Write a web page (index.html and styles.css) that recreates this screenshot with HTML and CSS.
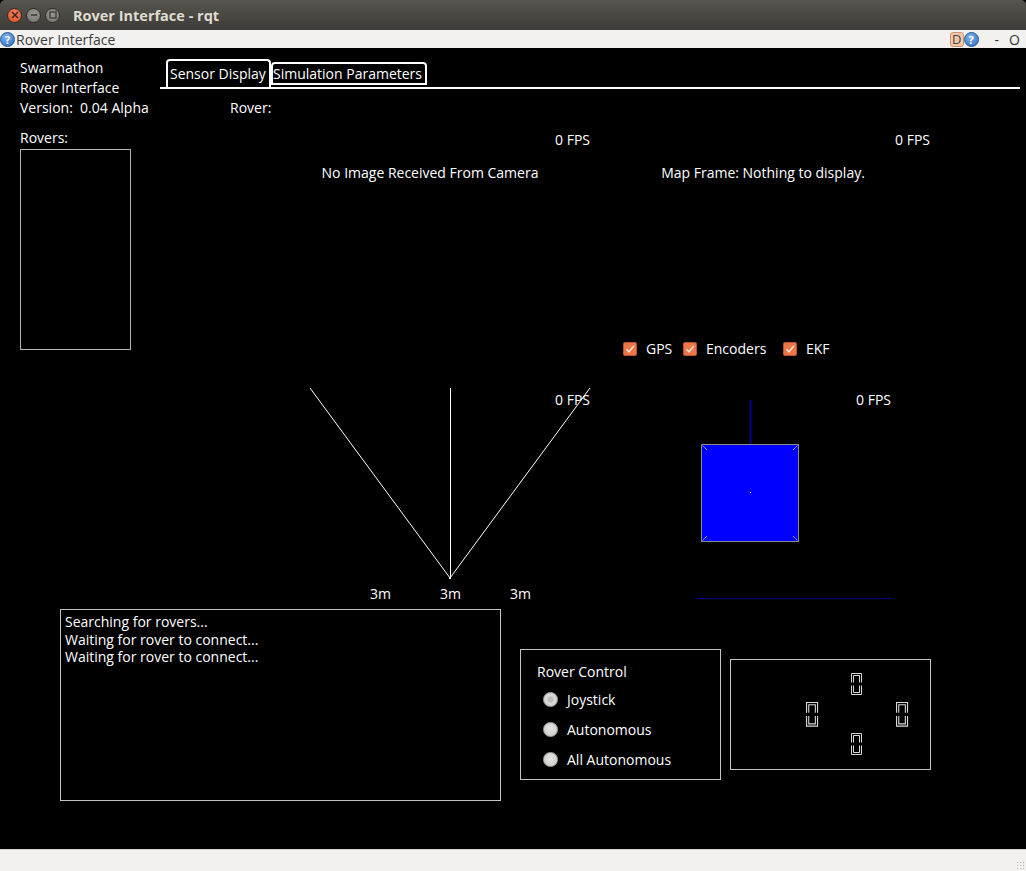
FILE: index.html
```html
<!DOCTYPE html>
<html lang="en">
<head>
<meta charset="utf-8">
<title>Rover Interface - rqt</title>
<link rel="stylesheet" href="styles.css">
</head>
<body>
<div class="window">
  <header class="titlebar">
    <div class="wbtns">
      <span class="wbtn close"><svg width="8" height="8" viewBox="0 0 8 8"><path d="M1 1L7 7M7 1L1 7" stroke="#3a2a22" stroke-width="1.6"/></svg></span>
      <span class="wbtn min"><svg width="8" height="8" viewBox="0 0 8 8"><path d="M1 4H7" stroke="#3c3b37" stroke-width="1.6"/></svg></span>
      <span class="wbtn max"><svg width="8" height="8" viewBox="0 0 8 8"><rect x="1" y="1" width="6" height="6" fill="none" stroke="#3c3b37" stroke-width="1.3"/></svg></span>
    </div>
    <div class="wtitle">Rover Interface - rqt</div>
  </header>

  <div class="menubar">
    <span class="help">?</span>
    <span class="mtitle">Rover Interface</span>
    <span class="spacer"></span>
    <span class="dicon">D</span>
    <span class="help">?</span>
    <span class="mctl dash">-</span>
    <span class="mctl">O</span>
  </div>

  <main class="main">
    <section class="top">
      <div class="info">
        <div>Swarmathon</div>
        <div>Rover Interface</div>
        <div>Version:&nbsp; 0.04 Alpha</div>
      </div>
      <div class="tabcol">
        <div class="tabbar">
          <div class="tab active">Sensor Display</div>
          <div class="tab">Simulation Parameters</div>
        </div>
        <div class="rover-label">Rover:</div>
      </div>
    </section>

    <section class="middle">
      <div class="rovers">
        <div class="label">Rovers:</div>
        <div class="listbox"></div>
      </div>

      <div class="sensors">
        <div class="panel camera">
          <div class="fps">0 FPS</div>
          <div class="msg">No Image Received From Camera</div>
        </div>

        <div class="panel map">
          <div class="fps">0 FPS</div>
          <div class="msg">Map Frame: Nothing to display.</div>
          <div class="checks">
            <label class="cb-item w1"><span class="cb"><svg width="12" height="12" viewBox="0 0 12 12"><path d="M2.5 6.2L5 8.8L9.8 3" fill="none" stroke="#fbe3d6" stroke-width="1.6"/></svg></span>GPS</label>
            <label class="cb-item w2"><span class="cb"><svg width="12" height="12" viewBox="0 0 12 12"><path d="M2.5 6.2L5 8.8L9.8 3" fill="none" stroke="#fbe3d6" stroke-width="1.6"/></svg></span>Encoders</label>
            <label class="cb-item"><span class="cb"><svg width="12" height="12" viewBox="0 0 12 12"><path d="M2.5 6.2L5 8.8L9.8 3" fill="none" stroke="#fbe3d6" stroke-width="1.6"/></svg></span>EKF</label>
          </div>
        </div>

        <div class="panel sonar">
          <div class="stack">
            <svg class="sonar-svg" width="340" height="200" viewBox="0 0 340 200">
              <line x1="50" y1="8" x2="190" y2="198" stroke="#fff" stroke-width="1"/>
              <line x1="190.5" y1="8" x2="190.5" y2="198" stroke="#fff" stroke-width="1"/>
              <line x1="330" y1="8" x2="190" y2="198" stroke="#fff" stroke-width="1"/>
              <rect x="189" y="197" width="2" height="2" fill="#fff"/>
            </svg>
            <div class="fps overlay">0 FPS</div>
          </div>
          <div class="ranges"><span>3m</span><span>3m</span><span>3m</span></div>
        </div>

        <div class="panel gps">
          <div class="stack">
            <svg width="340" height="225" viewBox="0 0 340 225">
              <line x1="150.5" y1="20" x2="150.5" y2="64" stroke="#00008e" stroke-width="2"/>
              <rect x="101.5" y="64.5" width="97" height="97" fill="#0000ff" stroke="#8a8a8a" stroke-width="1"/>
              <path d="M102.5 65.5L107 70M197.5 65.5L193 70M102.5 160.5L107 156M197.5 160.5L193 156" stroke="#8a8ae0" stroke-width="1"/>
              <rect x="150" y="112" width="1" height="1" fill="#fff"/>
              <line x1="95" y1="218.5" x2="291" y2="218.5" stroke="#00008e" stroke-width="1"/>
            </svg>
            <div class="fps overlay gps-fps">0 FPS</div>
          </div>
        </div>
      </div>
    </section>

    <section class="bottom">
      <div class="logbox">
        <div>Searching for rovers...</div>
        <div>Waiting for rover to connect...</div>
        <div>Waiting for rover to connect...</div>
      </div>

      <div class="control">
        <div class="ctitle">Rover Control</div>
        <div class="radio pressed"><span class="dot"></span>Joystick</div>
        <div class="radio"><span class="dot"></span>Autonomous</div>
        <div class="radio"><span class="dot"></span>All Autonomous</div>
      </div>

      <div class="joystick">
        <svg width="199" height="109" viewBox="0 0 199 109">
          <defs>
            <g id="rv" fill="none" stroke="#d8d8d8" stroke-width="1">
              <path d="M0.5 9.5V0.5H10.5V9.5"/>
              <path d="M0.5 12.5V21.5H10.5V12.5"/>
              <path d="M2.5 9.5V2.5H8.5V9.5"/>
              <path d="M2.5 12.5V19.5H8.5V12.5"/>
            </g>
          </defs>
          <use href="#rv" transform="translate(120 13)"/>
          <use href="#rv" transform="translate(75 42) scale(1.1 1.12)"/>
          <use href="#rv" transform="translate(165 42) scale(1.1 1.12)"/>
          <use href="#rv" transform="translate(120 73)"/>
        </svg>
      </div>
    </section>
  </main>

  <footer class="statusbar"><span class="grip"></span></footer>
</div>
</body>
</html>
```

FILE: styles.css
```css
* { box-sizing: border-box; }

html, body {
  margin: 0;
  padding: 0;
  background: #000;
}

body {
  width: 1026px;
  height: 871px;
  overflow: hidden;
  font-family: "Open Sans", "DejaVu Sans", sans-serif;
  font-size: 14px;
}

.window {
  display: flex;
  flex-direction: column;
  width: 1026px;
  height: 871px;
}

/* ---------- title bar ---------- */
.titlebar {
  height: 30px;
  display: flex;
  align-items: center;
  background: linear-gradient(#57554f, #3c3b37);
  border-radius: 5px 5px 0 0;
  padding-left: 7px;
}

.wbtns {
  display: flex;
  gap: 4px;
}

.wbtn {
  width: 15px;
  height: 15px;
  border-radius: 50%;
  display: flex;
  align-items: center;
  justify-content: center;
  border: 1px solid #2e2d2a;
}

.wbtn.close { background: radial-gradient(circle at 50% 35%, #f7845e, #df4a21); }
.wbtn.min, .wbtn.max { background: radial-gradient(circle at 50% 35%, #9a9790, #76736d); }

.wtitle {
  margin-left: 13px;
  color: #dfdbd2;
  font-weight: bold;
  font-size: 14.5px;
}

/* ---------- menu bar ---------- */
.menubar {
  height: 18px;
  display: flex;
  align-items: center;
  background: #f2f1f0;
  color: #3c3c3c;
  font-size: 14px;
}

.help {
  width: 15px;
  height: 15px;
  border-radius: 50%;
  background: radial-gradient(circle at 40% 30%, #7db4ec, #2e6cc0);
  border: 1px solid #24569a;
  color: #fff;
  font-weight: bold;
  font-size: 11px;
  line-height: 13px;
  text-align: center;
  flex: none;
}

.mtitle { margin-left: 1px; }

.spacer { flex: 1; }

.dicon {
  width: 14px;
  height: 15px;
  border-radius: 3px;
  background: #f6c7a6;
  border: 1px solid #c99473;
  color: #444;
  font-size: 13px;
  line-height: 13px;
  text-align: center;
}

.mctl {
  margin-left: 9px;
  margin-right: 6px;
  color: #333;
}
.mctl.dash { margin-left: 16px; margin-right: 1px; }

/* ---------- main ---------- */
.main {
  height: 801px;
  background: #000;
  color: #fff;
  display: flex;
  flex-direction: column;
}

.top {
  height: 72px;
  display: flex;
}

.info {
  width: 160px;
  padding: 10px 0 0 20px;
  line-height: 20px;
}

.tabcol {
  padding-top: 11px;
  width: 860px;
}

.tabbar {
  display: flex;
  align-items: flex-end;
  height: 30px;
  border-bottom: 2px solid #fff;
}

.tab {
  border: 2px solid #fff;
  border-radius: 4px 4px 0 0;
  line-height: 19px;
  white-space: nowrap;
}

.tab.active {
  width: 105px;
  height: 28px;
  margin-left: 6px;
  border-bottom: none;
  padding: 3px 0 0 2px;
}

.tab:not(.active) {
  width: 156px;
  height: 23px;
  margin-bottom: 2px;
  padding-left: 0;
}

.rover-label {
  margin-top: 9px;
  padding-left: 70px;
  line-height: 20px;
}

/* ---------- middle ---------- */
.middle {
  height: 485px;
  display: flex;
}

.rovers {
  width: 260px;
  padding: 8px 0 0 20px;
}

.rovers .label { line-height: 20px; }

.listbox {
  margin-top: 1px;
  width: 111px;
  height: 201px;
  border: 1px solid #b4b4b4;
}

.sensors {
  display: grid;
  grid-template-columns: 340px 340px;
  grid-template-rows: 260px 225px;
}

.panel {
  display: flex;
  flex-direction: column;
}

.fps {
  line-height: 20px;
  text-align: right;
  padding-right: 10px;
}

.camera, .map { padding-top: 10px; }

.msg {
  margin-top: 13px;
  line-height: 20px;
  text-align: center;
}

.map .msg { padding-right: 14px; }

.checks {
  margin-top: auto;
  margin-bottom: 21px;
  padding-left: 23px;
  display: flex;
  line-height: 20px;
}

.cb-item {
  display: flex;
  align-items: center;
  gap: 9px;
}
.cb-item.w1 { width: 60px; }
.cb-item.w2 { width: 100px; }

.cb {
  width: 14px;
  height: 14px;
  border-radius: 2px;
  background: #ef7646;
  border: 1px solid #b6552a;
  display: flex;
  align-items: center;
  justify-content: center;
}

.stack {
  display: grid;
}
.stack > * { grid-area: 1 / 1; }

.fps.overlay {
  align-self: start;
  justify-self: end;
  margin-top: 10px;
}

.gps-fps { padding-right: 49px; }

.ranges {
  display: flex;
  justify-content: center;
  gap: 50px;
  padding-left: 40px;
  padding-top: 4px;
  line-height: 20px;
}
.ranges span { width: 20px; text-align: center; }

/* ---------- bottom ---------- */
.bottom {
  display: flex;
  align-items: flex-start;
  padding-left: 60px;
}

.logbox {
  margin-top: 4px;
  width: 441px;
  height: 192px;
  border: 1px solid #c4c4c4;
  padding: 3px 4px;
  line-height: 17.5px;
}

.control {
  margin-top: 44px;
  margin-left: 19px;
  width: 201px;
  height: 131px;
  border: 1px solid #c4c4c4;
  padding: 12px 0 0 16px;
}

.ctitle { line-height: 20px; margin-bottom: 2px; }

.radio {
  display: flex;
  align-items: center;
  gap: 9px;
  height: 30px;
  padding-left: 6px;
}

.dot {
  width: 15px;
  height: 15px;
  border-radius: 50%;
  background: radial-gradient(circle at 50% 40%, #e6e6e4, #cfcfcd 70%, #b9b9b7);
  border: 1px solid #a8a8a6;
}

.radio.pressed .dot {
  background: radial-gradient(circle at 50% 50%, #bdbdbb 0 25%, #dcdcda 45%, #c4c4c2 100%);
}

.joystick {
  margin-top: 54px;
  margin-left: 9px;
  width: 201px;
  height: 111px;
  border: 1px solid #c4c4c4;
}
.joystick svg { display: block; }

/* ---------- status bar ---------- */
.statusbar {
  height: 22px;
  background: #f2f1f0;
  border-top: 1px solid #d6d5d2;
  position: relative;
}
.grip {
  position: absolute;
  right: 2px;
  bottom: 2px;
  width: 8px;
  height: 8px;
  background: radial-gradient(circle, #b8b6b2 0.8px, transparent 1px) 0 0 / 3px 3px;
}
```
